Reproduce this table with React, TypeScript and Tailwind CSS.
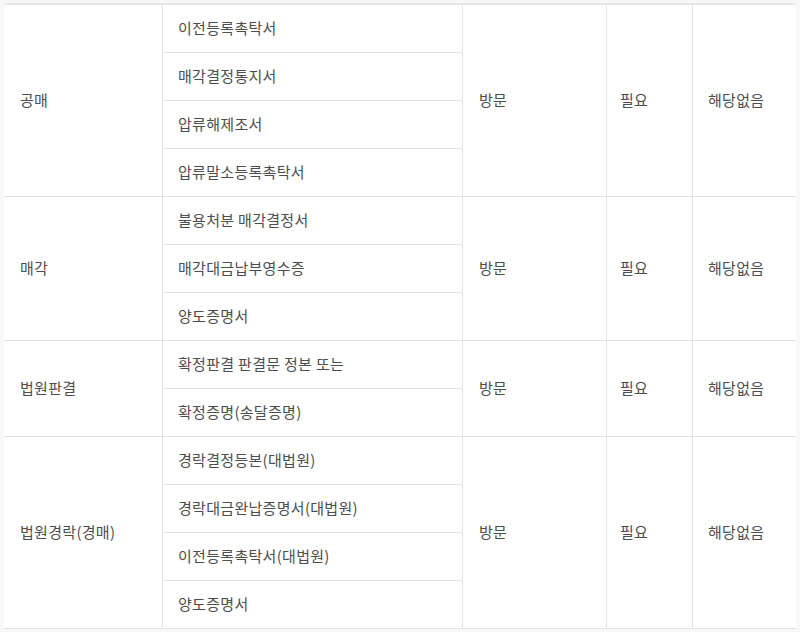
import React from "react";

const groups: { name: string; docs: string[] }[] = [
  { name: "공매", docs: ["이전등록촉탁서", "매각결정통지서", "압류해제조서", "압류말소등록촉탁서"] },
  { name: "매각", docs: ["불용처분 매각결정서", "매각대금납부영수증", "양도증명서"] },
  { name: "법원판결", docs: ["확정판결 판결문 정본 또는", "확정증명(송달증명)"] },
  { name: "법원경락(경매)", docs: ["경락결정등본(대법원)", "경락대금완납증명서(대법원)", "이전등록촉탁서(대법원)", "양도증명서"] },
];

export default function App() {
  return (
    <div
      className="w-[800px] h-[632px] overflow-hidden bg-[#f7f7f7] text-[15px] tracking-[0.3px] text-[#4d4d4d]"
      style={{ fontFamily: '"Noto Sans CJK KR", "Noto Sans", sans-serif' }}
    >
      <div className="ml-[4px] mt-[3px] w-[792px] bg-white border-t-2 border-[#e6e6e6]">
        {groups.map((g) => (
          <div
            key={g.name}
            className="grid grid-cols-[159px_300px_144px_86px_103px] border-b border-[#e3e3e3]"
          >
            <div className="flex items-center pl-[16px] border-r border-[#e3e3e3]">{g.name}</div>
            <div className="flex flex-col border-r border-[#e3e3e3]">
              {g.docs.map((d, i) => (
                <div
                  key={d + i}
                  className={
                    "h-[47px] flex items-center pl-[15px] " +
                    (i < g.docs.length - 1 ? "box-content border-b border-[#e3e3e3]" : "")
                  }
                >
                  {d}
                </div>
              ))}
            </div>
            <div className="flex items-center pl-[16px] border-r border-[#e3e3e3]">방문</div>
            <div className="flex items-center pl-[13px] border-r border-[#e3e3e3]">필요</div>
            <div className="flex items-center pl-[15px]">해당없음</div>
          </div>
        ))}
      </div>
    </div>
  );
}
